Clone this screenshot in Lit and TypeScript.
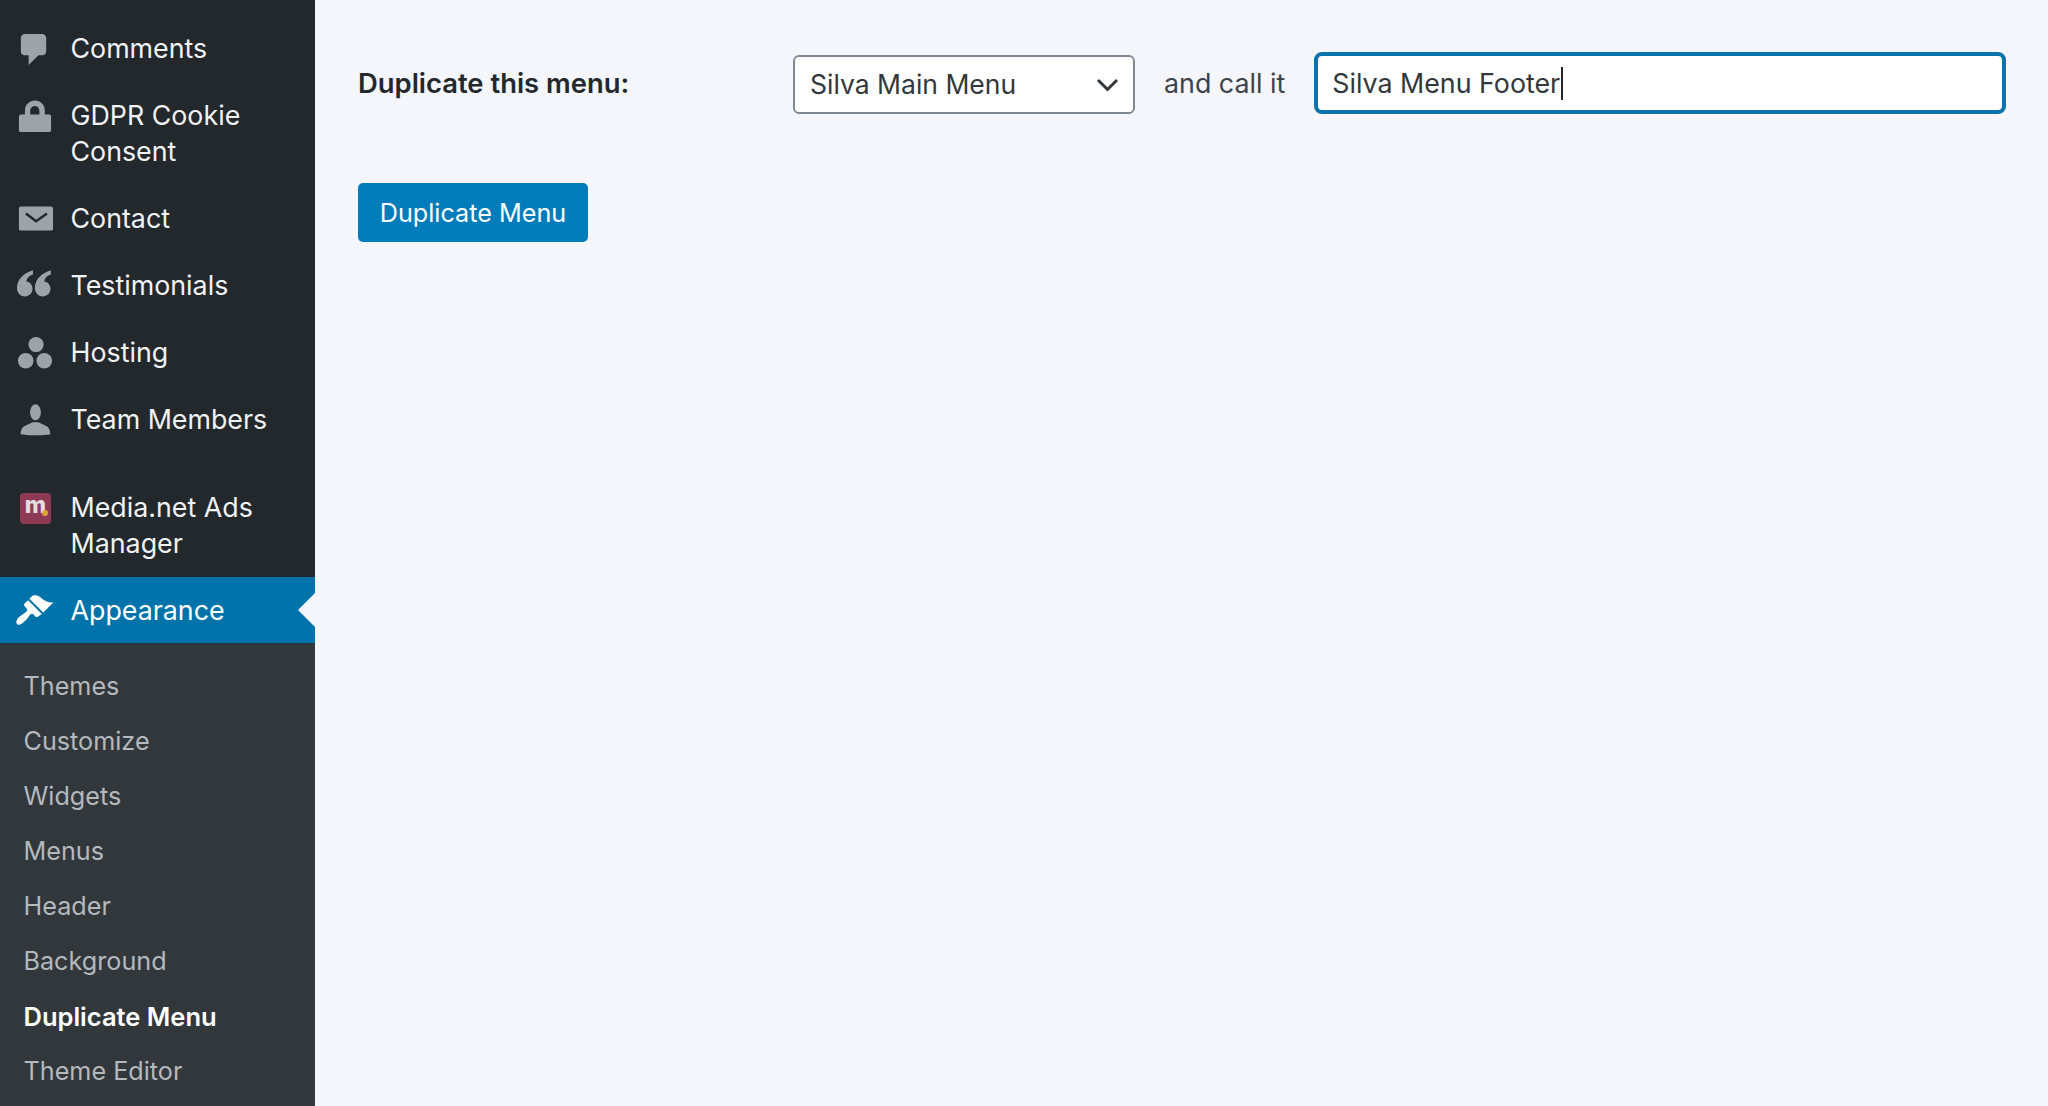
import { LitElement, html, css, svg } from "lit";
import { customElement } from "lit/decorators.js";

const icons: Record<string, unknown> = {
  comments: svg`<path d="M5 2h9c1.100 0 2 .9 2 2v7c0 1.100-.9 2-2 2h-2l-5 5v-5H5c-1.100 0-2-.9-2-2V4c0-1.100.9-2 2-2z"/>`,
  lock: svg`<path fill-rule="evenodd" d="M2 10q0-1 1-1h2.100V7c0-3 2.200-5.200 5.100-5.200s5.100 2.200 5.100 5.200v2h2.200q1 0 1 1v7q0 1-1 1H3q-1 0-1-1zM7.800 9h4.700V7.200c0-1.500-1-2.600-2.300-2.600S7.800 5.700 7.800 7.200z"/>`,
  mail: svg`<path d="M3 3.900h15.500q1 0 1 1v10.300q0 1-1 1H3q-1 0-1-1V4.900q0-1 1-1z"/><path d="M5.600 7.400l5.200 4 5.600-4" fill="none" stroke="#23282d" stroke-width="1.300"/>`,
  quote: svg`<path d="M9.200 2.200C4.500 3.500 1 7 1 11.300c0 2.500 1.700 4.300 4 4.300s4-1.700 4-3.900c0-2.200-1.500-3.700-3.200-3.800C6 6.200 7.400 5 9.200 4.400z"/><path d="M18.400 2.200c-4.700 1.300-8.200 4.800-8.200 9.100 0 2.500 1.700 4.300 4 4.300s4-1.700 4-3.900c0-2.200-1.500-3.700-3.200-3.800.2-1.700 1.600-2.900 3.400-3.500z"/>`,
  hosting: svg`<circle cx="10.800" cy="5.900" r="3.900"/><circle cx="5.500" cy="14.200" r="4"/><circle cx="15" cy="14.200" r="4"/>`,
  team: svg`<ellipse cx="10.500" cy="6.300" rx="2.800" ry="4.100"/><path d="M2.900 17.500c0-3 1.500-4.300 4-5.100l2.100-1h3l2.100 1c2.500.8 4 2.100 4 5.100-2 .7-13 .7-15.200 0z"/>`,
  brush: svg`<path d="M14.480 11.060L7.410 3.990l1.500-1.500c.5-.56 2.300-.47 3.510.32 1.210.8 1.430 1.280 2.910 2.100 1.180.64 2.450 1.260 4.450.85zm-.71.710L6.700 4.700 4.930 6.470c-.39.39-.39 1.020 0 1.410l1.060 1.060c.39.39.39 1.030 0 1.420-.6.6-1.430 1.110-2.210 1.690-.35.26-.7.53-1.010.84C1.430 13.230 0 15.860 1.130 16.990c.98.98 2.720-.25 4.260-1.810.41-.42.7-.76.87-1.010.58-.78 1.090-1.610 1.690-2.210.39-.39 1.030-.39 1.420 0l1.060 1.060c.39.39 1.020.39 1.410 0z"/>`,
};

@customElement("app-root")
export class AppRoot extends LitElement {
  static styles = css`
    :host {
      display: flex;
      height: 1106px;
      overflow: hidden;
      background: #f4f6fb;
      font-family: Inter, "Liberation Sans", sans-serif;
    }
    .side {
      width: 315px;
      flex: none;
      background: #23282d;
      padding-top: 15.5px;
      box-sizing: border-box;
      color: #f0f2f3;
      font-size: 26.8px;
      line-height: 35.5px;
    }
    .item {
      display: flex;
      align-items: flex-start;
      padding: 15.75px 12px 15.75px 70.5px;
      position: relative;
    }
    .item svg.ico {
      position: absolute;
      left: 15px;
      top: 14px;
      width: 39px;
      height: 39px;
      fill: #9ea3a8;
    }
    .gap {
      margin-top: 21.5px;
    }
    .active {
      background: #0073aa;
      color: #fff;
      height: 66px;
      box-sizing: border-box;
    }
    .active svg.ico {
      fill: #fff;
    }
    .active::after {
      content: "";
      position: absolute;
      right: 0;
      top: 16px;
      border: 17px solid transparent;
      border-right-color: #f4f6fb;
      border-left-width: 0;
    }
    .sub {
      background: #32373c;
      padding: 16px 0 20px 23.5px;
      color: #b4b9be;
      font-size: 25.2px;
    }
    .sub div {
      height: 55px;
      line-height: 55px;
    }
    .sub .on {
      color: #fff;
      font-weight: 600;
      font-size: 25.5px;
    }
    .mlogo {
      position: absolute;
      left: 20px;
      top: 18px;
      width: 31px;
      height: 31px;
      border-radius: 4px;
      background: #8e3a54;
      color: #e6dde0;
      font: 800 23px/25px Inter, sans-serif;
      text-align: center;
    }
    .mlogo::after {
      content: "";
      position: absolute;
      right: 3px;
      bottom: 8px;
      width: 6px;
      height: 6px;
      border-radius: 50%;
      background: #d9a53a;
    }
    .main {
      flex: 1;
      padding: 52px 42px 0 43px;
      min-width: 0;
      color: #23282d;
    }
    .row {
      display: flex;
      align-items: center;
      font-size: 26.8px;
    }
    .label {
      width: 435px;
      flex: none;
      font-weight: 600;
      font-size: 27.4px;
    }
    .selwrap {
      position: relative;
      width: 342px;
      height: 59px;
      margin: 3px 29px 0 0;
      flex: none;
    }
    select {
      appearance: none;
      width: 100%;
      height: 100%;
      box-sizing: border-box;
      border: 2px solid #7e8993;
      border-radius: 6px;
      background: #fff;
      color: #32373c;
      font: inherit;
      font-size: 26.5px;
      padding: 0 0 1px 15px;
      outline: none;
    }
    .chev {
      position: absolute;
      right: 16px;
      top: 22px;
      width: 23px;
      height: 16px;
      fill: none;
      stroke: #32373c;
      stroke-width: 3;
    }
    .and {
      color: #3c434a;
    }
    .input {
      flex: 1;
      margin-left: 29px;
      height: 62px;
      box-sizing: border-box;
      border: 4px solid #0a73ab;
      border-radius: 8px;
      background: #fff;
      color: #32373c;
      display: flex;
      align-items: center;
      padding-left: 14px;
    }
    .caret {
      width: 2px;
      height: 33px;
      background: #23282d;
      margin-left: 1px;
    }
    .btn {
      display: block;
      margin-top: 69px;
      width: 230px;
      height: 59px;
      border: 0;
      border-radius: 5px;
      background: #007cba;
      color: #fff;
      font: inherit;
      font-size: 25.2px;
      padding: 0;
    }
  `;

  private ico(name: string) {
    return html`<svg class="ico" viewBox="0 0 20 20">${icons[name]}</svg>`;
  }

  render() {
    const top: [string, string][] = [
      ["comments", "Comments"],
      ["lock", "GDPR Cookie Consent"],
      ["mail", "Contact"],
      ["quote", "Testimonials"],
      ["hosting", "Hosting"],
      ["team", "Team Members"],
    ];
    const sub = ["Themes", "Customize", "Widgets", "Menus", "Header", "Background", "Duplicate Menu", "Theme Editor"];
    return html`
      <nav class="side">
        ${top.map(([i, t]) => html`<div class="item">${this.ico(i)}<span>${t}</span></div>`)}
        <div class="item gap"><span class="mlogo">m</span><span>Media.net Ads Manager</span></div>
        <div class="item active">${this.ico("brush")}<span>Appearance</span></div>
        <div class="sub">
          ${sub.map((s) => html`<div class=${s === "Duplicate Menu" ? "on" : ""}>${s}</div>`)}
        </div>
      </nav>
      <main class="main">
        <div class="row">
          <span class="label">Duplicate this menu:</span>
          <div class="selwrap">
            <select><option>Silva Main Menu</option></select>
            <svg class="chev" viewBox="0 0 23 16"><path d="M2 3l9.500 9.500L21 3" /></svg>
          </div>
          <span class="and">and call it</span>
          <div class="input" role="textbox"><span>Silva Menu Footer</span><span class="caret"></span></div>
        </div>
        <button class="btn">Duplicate Menu</button>
      </main>
    `;
  }
}
